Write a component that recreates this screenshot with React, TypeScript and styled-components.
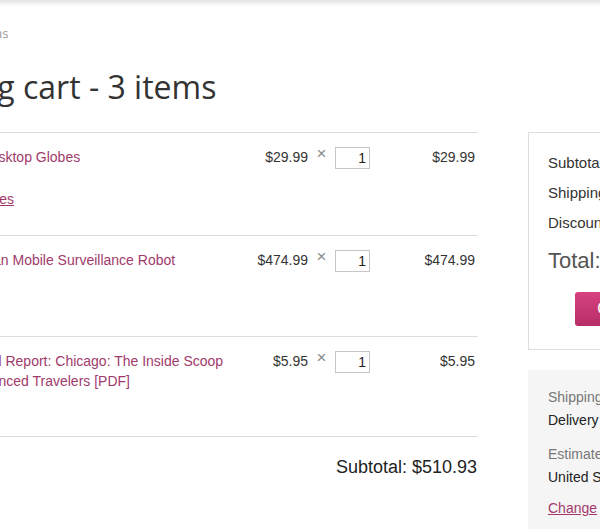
import React from "react";
import styled, { createGlobalStyle } from "styled-components";

const GlobalStyle = createGlobalStyle`
  html, body {
    margin: 0;
    padding: 0;
    background: #ffffff;
    overflow: hidden;
  }
  body {
    font-family: "Liberation Sans", Arial, sans-serif;
    color: #333333;
  }
`;

const TopShade = styled.div`
  height: 6px;
  background: linear-gradient(to bottom, #e2e2e2, #ffffff);
`;

const Page = styled.div`
  margin-left: -124px;
  padding-top: 18px;
  width: 940px;
`;

const Breadcrumb = styled.div`
  font-family: "Open Sans", sans-serif;
  font-size: 13px;
  line-height: 18px;
  color: #9a9a9a;
  padding-left: 22px;
`;

const Heading = styled.h1`
  margin: 26px 0 26px -2px;
  font-family: "Open Sans", sans-serif;
  font-size: 32px;
  font-weight: 400;
  line-height: 38px;
  color: #333333;
`;

const Content = styled.div`
  display: flex;
  align-items: flex-start;
  gap: 50px;
`;

const Cart = styled.section`
  width: 602px;
  flex: none;
`;

const ItemList = styled.div`
  border-bottom: 1px solid #dddddd;
`;

const Row = styled.div<{ $h: number }>`
  box-sizing: border-box;
  display: flex;
  align-items: flex-start;
  min-height: ${(p) => p.$h}px;
  padding: 14px 3px 0 0;
  border-top: 1px solid #dddddd;
  font-size: 14px;
  line-height: 20px;
`;

const Thumb = styled.div`
  flex: none;
  width: 60px;
  height: 60px;
  margin-right: 15px;
  background: #f2f2f2;
`;

const NameCell = styled.div`
  flex: 1;
  min-width: 0;
  display: flex;
  flex-direction: column;
  align-items: flex-start;
`;

const ProductLink = styled.a`
  color: #a13a6b;
  text-decoration: none;
`;

const NoteLink = styled.a`
  margin-top: 22px;
  color: #a13a6b;
  text-decoration: underline;
`;

const Price = styled.div`
  flex: none;
  width: 70px;
  text-align: right;
`;

const Times = styled.span`
  flex: none;
  width: 27px;
  text-align: center;
  font-size: 17px;
  line-height: 14px;
  color: #8a8a8a;
`;

const QtyInput = styled.input`
  flex: none;
  box-sizing: border-box;
  width: 35px;
  height: 22px;
  margin: 0;
  padding: 0 3px;
  border: 1px solid #c6c6c6;
  border-radius: 0;
  text-align: right;
  font-family: "Liberation Sans", Arial, sans-serif;
  font-size: 14px;
  color: #222222;
  background: #ffffff;
`;

const LineTotal = styled.div`
  flex: none;
  width: 105px;
  text-align: right;
`;

const CartSubtotal = styled.div`
  margin-top: 18px;
  padding-right: 1px;
  text-align: right;
  font-size: 18px;
  line-height: 24px;
  color: #222222;
`;

const Sidebar = styled.aside`
  flex: none;
  width: 206px;
`;

const SummaryBox = styled.div`
  display: flex;
  flex-direction: column;
  border: 1px solid #dddddd;
  padding: 15px 19px 23px;
`;

const SummaryLine = styled.div`
  display: flex;
  justify-content: space-between;
  font-size: 15px;
  line-height: 30px;
  color: #333333;
  white-space: nowrap;
`;

const TotalLine = styled(SummaryLine)`
  margin-top: 5px;
  font-size: 22px;
  line-height: 36px;
  color: #555555;
`;

const ButtonRow = styled.div`
  display: flex;
  justify-content: center;
  margin-top: 13px;
`;

const CheckoutButton = styled.button`
  height: 34px;
  padding: 0 22px;
  border: none;
  border-radius: 3px;
  background: linear-gradient(to bottom, #d6437f, #b72d65);
  color: #ffffff;
  font-family: "Liberation Sans", Arial, sans-serif;
  font-size: 16px;
  white-space: nowrap;
`;

const InfoBox = styled.div`
  margin-top: 20px;
  background: #f5f5f5;
  padding: 16px 20px 14px;
  font-size: 14px;
  line-height: 23px;
  white-space: nowrap;
`;

const InfoGroup = styled.div<{ $gap: number }>`
  margin-top: ${(p) => p.$gap}px;
`;

const InfoLabel = styled.div`
  color: #777777;
`;

const InfoValue = styled.div`
  color: #222222;
`;

const ChangeLink = styled.a`
  display: inline-block;
  margin-top: 8px;
  color: #a13a6b;
  text-decoration: underline;
`;

type Item = {
  name: string;
  price: string;
  qty: number;
  total: string;
  note?: string;
  h: number;
};

const items: Item[] = [
  { name: "Mini Desktop Globes", price: "$29.99", qty: 1, total: "$29.99", note: "Add notes", h: 103 },
  { name: "Guardian Mobile Surveillance Robot", price: "$474.99", qty: 1, total: "$474.99", h: 101 },
  {
    name: "A Travel Report: Chicago: The Inside Scoop Experienced Travelers [PDF]",
    price: "$5.95",
    qty: 1,
    total: "$5.95",
    h: 100,
  },
];

export default function App() {
  return (
    <>
      <GlobalStyle />
      <TopShade />
      <Page>
        <Breadcrumb>Home / Cart items</Breadcrumb>
        <Heading>Shopping cart - 3 items</Heading>
        <Content>
          <Cart>
            <ItemList>
              {items.map((it) => (
                <Row key={it.name} $h={it.h}>
                  <Thumb />
                  <NameCell>
                    <ProductLink href="#">{it.name}</ProductLink>
                    {it.note && <NoteLink href="#">{it.note}</NoteLink>}
                  </NameCell>
                  <Price>{it.price}</Price>
                  <Times>×</Times>
                  <QtyInput defaultValue={String(it.qty)} />
                  <LineTotal>{it.total}</LineTotal>
                </Row>
              ))}
            </ItemList>
            <CartSubtotal>Subtotal: $510.93</CartSubtotal>
          </Cart>
          <Sidebar>
            <SummaryBox>
              <SummaryLine>
                <span>Subtotal</span>
                <span>$510.93</span>
              </SummaryLine>
              <SummaryLine>
                <span>Shipping</span>
                <span>$0.00</span>
              </SummaryLine>
              <SummaryLine>
                <span>Discount</span>
                <span>$0.00</span>
              </SummaryLine>
              <TotalLine>
                <span>Total:</span>
                <span>$510.93</span>
              </TotalLine>
              <ButtonRow>
                <CheckoutButton>Checkout</CheckoutButton>
              </ButtonRow>
            </SummaryBox>
            <InfoBox>
              <InfoGroup $gap={0}>
                <InfoLabel>Shipping method</InfoLabel>
                <InfoValue>Delivery</InfoValue>
              </InfoGroup>
              <InfoGroup $gap={11}>
                <InfoLabel>Estimated for</InfoLabel>
                <InfoValue>United States</InfoValue>
              </InfoGroup>
              <ChangeLink href="#">Change</ChangeLink>
            </InfoBox>
          </Sidebar>
        </Content>
      </Page>
    </>
  );
}
